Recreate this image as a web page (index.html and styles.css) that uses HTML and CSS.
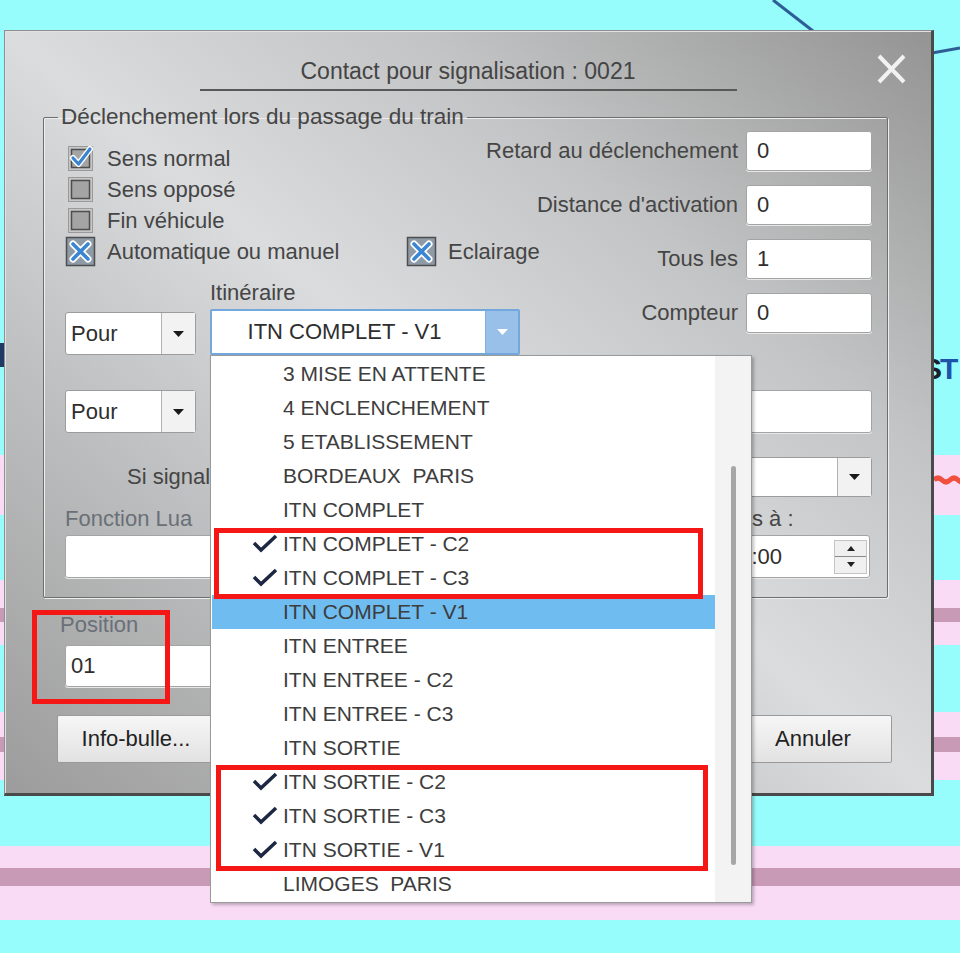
FILE: index.html
```html
<!DOCTYPE html>
<html>
	<head>
		<meta charset="utf-8">
		<title>Contact pour signalisation : 0021</title>
		<link rel="stylesheet" href="styles.css">
	</head>
	<body>
		<!-- fond du réseau derrière la fenêtre -->
		<svg class="desk-lines" width="960" height="953" viewBox="0 0 960 953">
			<path d="M773 0 L813 31" stroke="#2d5e95" stroke-width="3" fill="none"/>
			<path d="M932 53 L960 48" stroke="#2d5e95" stroke-width="3" fill="none"/>
			<rect x="0" y="343" width="5" height="24" fill="#1f3a66"/>
			<path d="M934 480 q4 -4 8 0 t8 0 t8 0 t8 0" stroke="#f2503e" stroke-width="5" fill="none"/>
		</svg>
		<span class="desk-label"><span class="desk-s">S</span><span class="desk-t">T</span></span>

		<div class="dialog">
			<div class="titlebar">
				<div class="title">Contact pour signalisation : 0021</div>
				<span class="close">
					<svg width="31" height="32" viewBox="0 0 31 32"><path d="M3 3 L28 29 M28 3 L3 29" stroke="#f2f2f2" stroke-width="4" fill="none"/></svg>
				</span>
			</div>

			<fieldset class="group">
				<legend>Déclenchement lors du passage du train</legend>
				<div class="group-body">
					<div class="group-top">
						<div class="left">
							<div class="checks">
								<label class="check">
									<svg class="box" width="31" height="31" viewBox="0 0 31 31"><rect x="3.5" y="3.5" width="24" height="24" fill="#c6c6c6" stroke="#9a9a9a"/><rect x="6.5" y="6.5" width="18" height="18" fill="#a4a4a4" stroke="#4e4e4e" stroke-width="1.5"/><path d="M8 15 L13.5 21 L25 6" fill="none" stroke="#ffffff" stroke-width="6" stroke-linecap="round" stroke-linejoin="round"/><path d="M8 15 L13.5 21 L25 6" fill="none" stroke="#3a83cf" stroke-width="3.2" stroke-linecap="round" stroke-linejoin="round"/></svg>
									Sens normal
								</label>
								<label class="check">
									<svg class="box" width="31" height="31" viewBox="0 0 31 31"><rect x="3.5" y="3.5" width="24" height="24" fill="#c6c6c6" stroke="#9a9a9a"/><rect x="6.5" y="6.5" width="18" height="18" fill="#a4a4a4" stroke="#4e4e4e" stroke-width="1.5"/></svg>
									Sens opposé
								</label>
								<label class="check">
									<svg class="box" width="31" height="31" viewBox="0 0 31 31"><rect x="3.5" y="3.5" width="24" height="24" fill="#c6c6c6" stroke="#9a9a9a"/><rect x="6.5" y="6.5" width="18" height="18" fill="#a4a4a4" stroke="#4e4e4e" stroke-width="1.5"/></svg>
									Fin véhicule
								</label>
								<div class="check-row">
									<label class="check">
										<svg class="box" width="31" height="31" viewBox="0 0 31 31"><rect x="1.5" y="1.5" width="28" height="28" fill="#8e9aa6" stroke="#4e4e4e" stroke-width="1.5"/><path d="M8 8 L23 23 M23 8 L8 23" stroke="#ffffff" stroke-width="7" stroke-linecap="round"/><path d="M8 8 L23 23 M23 8 L8 23" stroke="#3a86d4" stroke-width="3.6" stroke-linecap="round"/></svg>
										Automatique ou manuel
									</label>
									<label class="check">
										<svg class="box" width="31" height="31" viewBox="0 0 31 31"><rect x="1.5" y="1.5" width="28" height="28" fill="#8e9aa6" stroke="#4e4e4e" stroke-width="1.5"/><path d="M8 8 L23 23 M23 8 L8 23" stroke="#ffffff" stroke-width="7" stroke-linecap="round"/><path d="M8 8 L23 23 M23 8 L8 23" stroke="#3a86d4" stroke-width="3.6" stroke-linecap="round"/></svg>
										Eclairage
									</label>
								</div>
							</div>

							<div class="itin-grid">
								<span></span>
								<span class="label">Itinéraire</span>
								<div class="combo">
									<span class="combo-text">Pour</span>
									<span class="combo-btn"><svg width="11" height="6" viewBox="0 0 11 6"><path d="M0 0 H11 L5.5 6 Z" fill="#1a1a1a"/></svg></span>
								</div>
								<div class="combo combo-open">
									<span class="combo-text">ITN COMPLET - V1</span>
									<span class="combo-btn"><svg width="11" height="6" viewBox="0 0 11 6"><path d="M0 0 H11 L5.5 6 Z" fill="#ffffff"/></svg></span>

									<div class="dropdown">
										<div class="items">
											<div class="item"><span class="mark"></span>3 MISE EN ATTENTE</div>
											<div class="item"><span class="mark"></span>4 ENCLENCHEMENT</div>
											<div class="item"><span class="mark"></span>5 ETABLISSEMENT</div>
											<div class="item"><span class="mark"></span>BORDEAUX&nbsp; PARIS</div>
											<div class="item"><span class="mark"></span>ITN COMPLET</div>
											<div class="item"><span class="mark"><svg width="26" height="20" viewBox="0 0 26 20"><path d="M2 9 L9 16 L24 2" fill="none" stroke="#1d2742" stroke-width="3.5"/></svg></span>ITN COMPLET - C2</div>
											<div class="item"><span class="mark"><svg width="26" height="20" viewBox="0 0 26 20"><path d="M2 9 L9 16 L24 2" fill="none" stroke="#1d2742" stroke-width="3.5"/></svg></span>ITN COMPLET - C3</div>
											<div class="item selected"><span class="mark"></span>ITN COMPLET - V1</div>
											<div class="item"><span class="mark"></span>ITN ENTREE</div>
											<div class="item"><span class="mark"></span>ITN ENTREE - C2</div>
											<div class="item"><span class="mark"></span>ITN ENTREE - C3</div>
											<div class="item"><span class="mark"></span>ITN SORTIE</div>
											<div class="item"><span class="mark"><svg width="26" height="20" viewBox="0 0 26 20"><path d="M2 9 L9 16 L24 2" fill="none" stroke="#1d2742" stroke-width="3.5"/></svg></span>ITN SORTIE - C2</div>
											<div class="item"><span class="mark"><svg width="26" height="20" viewBox="0 0 26 20"><path d="M2 9 L9 16 L24 2" fill="none" stroke="#1d2742" stroke-width="3.5"/></svg></span>ITN SORTIE - C3</div>
											<div class="item"><span class="mark"><svg width="26" height="20" viewBox="0 0 26 20"><path d="M2 9 L9 16 L24 2" fill="none" stroke="#1d2742" stroke-width="3.5"/></svg></span>ITN SORTIE - V1</div>
											<div class="item"><span class="mark"></span>LIMOGES&nbsp; PARIS</div>
										</div>
										<div class="scrollbar"><span class="thumb"></span></div>
									</div>
								</div>
							</div>
						</div>

						<div class="fields">
							<div class="field"><span>Retard au déclenchement</span><span class="input">0</span></div>
							<div class="field"><span>Distance d'activation</span><span class="input">0</span></div>
							<div class="field"><span>Tous les</span><span class="input">1</span></div>
							<div class="field"><span>Compteur</span><span class="input">0</span></div>
						</div>
					</div>

					<div class="row row-a">
						<div class="combo">
							<span class="combo-text">Pour</span>
							<span class="combo-btn"><svg width="11" height="6" viewBox="0 0 11 6"><path d="M0 0 H11 L5.5 6 Z" fill="#1a1a1a"/></svg></span>
						</div>
						<span class="input"></span>
					</div>
					<div class="row row-b">
						<span class="label indent">Si signal fermé :</span>
						<div class="combo combo-wide">
							<span class="combo-text"></span>
							<span class="combo-btn"><svg width="11" height="6" viewBox="0 0 11 6"><path d="M0 0 H11 L5.5 6 Z" fill="#1a1a1a"/></svg></span>
						</div>
					</div>
					<div class="row row-c">
						<span class="label muted">Fonction Lua</span>
						<span class="label">Heures à :</span>
					</div>
					<div class="row row-d">
						<span class="input"></span>
						<span class="input spinner">
							<span class="spin-text">00:00</span>
							<span class="spin">
								<span class="spin-btn"><svg width="8" height="5" viewBox="0 0 8 5"><path d="M0 5 H8 L4 0 Z" fill="#222"/></svg></span>
								<span class="spin-btn"><svg width="8" height="5" viewBox="0 0 8 5"><path d="M0 0 H8 L4 5 Z" fill="#222"/></svg></span>
							</span>
						</span>
					</div>
				</div>
			</fieldset>

			<div class="position">
				<span class="label muted">Position</span>
				<span class="input position-input">01</span>
			</div>

			<div class="buttons">
				<span class="button">Info-bulle...</span>
				<span class="button push">OK</span>
				<span class="button">Annuler</span>
			</div>
		</div>

		<!-- repères rouges -->
		<div class="mark-box box-1"></div>
		<div class="mark-box box-2"></div>
		<div class="mark-box box-3"></div>
	</body>
</html>
```

FILE: styles.css
```css
* {
	box-sizing:border-box;
}

body {
	position:relative;
	margin:0;
	width:960px;
	height:953px;
	overflow:hidden;

	font-family:"Liberation Sans", Arial, sans-serif;
	font-size:22px;
	color:#454545;

	background:linear-gradient(to bottom,
		#97fcfc 0px, #97fcfc 455px,
		#f9dbf6 455px, #f9dbf6 515px,
		#97fcfc 515px, #97fcfc 580px,
		#f9dbf6 580px, #f9dbf6 608px,
		#c99ab6 608px, #c99ab6 622px,
		#f9dbf6 622px, #f9dbf6 645px,
		#97fcfc 645px, #97fcfc 712px,
		#f9dbf6 712px, #f9dbf6 737px,
		#c99ab6 737px, #c99ab6 752px,
		#f9dbf6 752px, #f9dbf6 780px,
		#97fcfc 780px, #97fcfc 846px,
		#f9dbf6 846px, #f9dbf6 868px,
		#c99ab6 868px, #c99ab6 886px,
		#f9dbf6 886px, #f9dbf6 920px,
		#97fcfc 920px);
}

/* fond */
.desk-lines {
	position:absolute;
	left:0px;
	top:0px;
}
.desk-label {
	position:absolute;
	left:922px;
	top:352px;

	font-size:30px;
	font-weight:bold;
	line-height:34px;
	letter-spacing:-2px;
}
	.desk-s {
		color:#1a1f2e;
	}
	.desk-t {
		color:#1e52a8;
	}

/* fenêtre */
.dialog {
	position:absolute;
	left:4px;
	top:30px;
	width:930px;
	height:766px;

	background:linear-gradient(to top right, #9c9c9c 0%, #bdbebf 28%, #dadcde 50%, #c3c4c5 72%, #949494 100%);
	border:1px solid #8e8e8e;
	border-right:3px solid #4a4a4a;
	border-bottom:3px solid #4a4a4a;
	box-shadow:inset 1px 1px 0 #e2e2e2;
}

.titlebar {
	display:grid;
	grid-template-columns:1fr 537px 1fr;
}
	.title {
		grid-column:2;
		padding:26px 0px 4px;

		border-bottom:2px solid #585858;

		font-size:23px;
		line-height:28px;
		text-align:center;
		color:#444;
	}
	.close {
		grid-column:3;
		justify-self:end;
		align-self:start;

		margin:22px 24px 0px 0px;
		width:31px;
		height:32px;
	}
	.close svg {
		display:block;
	}

/* cadre */
.group {
	margin:14px 43px 0px 38px;
	padding:0px;
	min-width:0px;

	border:1px solid #6e6e6e;
	border-radius:2px;
	box-shadow:inset 1px 1px 0 #eeeeee, 1px 1px 0 #eeeeee;
}
	.group legend {
		margin-left:14px;
		padding:0px 3px;

		font-size:22.5px;
		line-height:24px;
	}

.group-body {
	padding:2px 15px 19px 21px;
}

.group-top {
	display:grid;
	grid-template-columns:minmax(0, 1fr) auto;
	align-items:start;
	height:224px;
}

.checks {
	margin-top:12px;
}
	.check {
		display:flex;
		align-items:center;
		gap:11px;

		height:31px;
		white-space:nowrap;
	}
	.check .box {
		flex:none;
		display:block;
	}
	.check-row {
		display:grid;
		grid-template-columns:341px auto;
	}

.itin-grid {
	display:grid;
	grid-template-columns:131px 310px;
	column-gap:14px;
	row-gap:4px;
	align-items:end;

	margin-top:14px;
}

.label {
	line-height:24px;
	white-space:nowrap;
}
	.muted {
		color:#6a7078;
	}
	.indent {
		padding-left:62px;
	}

/* listes déroulantes */
.combo {
	position:relative;
	display:flex;

	height:43px;

	background:white;
	border:1px solid #9c9c9c;
	border-radius:3px;
}
	.combo-text {
		flex:1;
		display:flex;
		align-items:center;
		padding-left:5px;

		color:#2e2e2e;
	}
	.combo-btn {
		display:flex;
		align-items:center;
		justify-content:center;

		width:34px;

		background:#f2f2f2;
		border-left:1px solid #b2b2b2;
	}
	.combo-wide {
		height:40px;
	}

.combo-open {
	height:46px;
	border:2px solid #72a8de;
	border-radius:2px;
}
	.combo-open .combo-text {
		justify-content:center;
		padding-left:0px;
		padding-right:8px;
	}
	.combo-open .combo-btn {
		width:33px;

		background:#98c0e8;
		border-left:1px solid #7fb0e0;
	}

.dropdown {
	position:absolute;
	left:-2px;
	top:calc(100% + 2px);
	z-index:10;

	display:flex;
	width:542px;
	height:548px;

	background:white;
	border:1px solid #9a9a9a;
	box-shadow:2px 2px 3px rgba(0,0,0,0.25);
}
	.items {
		width:503px;
		margin-left:1px;
		padding-top:1px;
	}
	.item {
		display:flex;
		align-items:center;

		height:34px;

		font-size:21px;
		color:#3d3d3d;
		white-space:nowrap;
	}
	.item.selected {
		background:#6ebcf0;
	}
	.mark {
		display:flex;
		align-items:center;

		margin-left:40px;
		margin-right:5px;
		width:26px;
		height:20px;
	}
	.mark svg {
		display:block;
	}
	.scrollbar {
		width:36px;
		background:#f3f3f3;
	}
	.thumb {
		display:block;

		margin:110px 0px 0px 16px;
		width:5px;
		height:399px;

		background:#a6a6a6;
		border-radius:3px;
	}

/* champs */
.fields {
	display:flex;
	flex-direction:column;
	gap:14px;
}
	.field {
		display:flex;
		align-items:center;
		justify-content:flex-end;
		gap:8px;

		white-space:nowrap;
	}

.input {
	display:flex;
	align-items:center;

	width:126px;
	height:40px;
	padding-left:10px;

	background:white;
	border:1px solid #a4a4a4;
	border-radius:3px;
	box-shadow:0 1px 0 #e8e8e8;

	color:#2e2e2e;
}

.row {
	display:grid;
	grid-template-columns:1fr 180px;
	column-gap:30px;
	align-items:center;
}
	.row .input {
		width:auto;
	}
	.row-a {
		margin-top:35px;
	}
	.row-a .combo {
		width:131px;
	}
	.row-a .input {
		height:43px;
	}
	.row-b {
		margin-top:24px;
	}
	.row-c {
		margin-top:10px;
	}
	.row-d {
		margin-top:4px;
	}
	.row-d .input {
		height:43px;
	}

.spinner {
	justify-content:space-between;
	margin-right:2px;
	padding-left:34px;
}
	.spin {
		display:flex;
		flex-direction:column;
		justify-content:center;

		margin-right:2px;
		width:33px;
		height:34px;

		background:#f0f0f0;
		border:1px solid #c4c4c4;
	}
	.spin-btn {
		flex:1;
		display:flex;
		align-items:center;
		justify-content:center;
	}
	.spin-btn + .spin-btn {
		border-top:1px solid #8a8a8a;
	}

/* bas de la fenêtre */
.position {
	display:flex;
	flex-direction:column;
	align-items:flex-start;

	margin:15px 0px 0px 55px;
}
	.position-input {
		margin:8px 0px 0px 5px;
		width:170px;
		height:42px;
		padding-left:5px;
	}

.buttons {
	display:flex;
	gap:16px;

	margin:28px 39px 0px 52px;
}
	.button {
		display:flex;
		align-items:center;
		justify-content:center;

		width:158px;
		height:48px;

		background:linear-gradient(#f6f6f6, #e2e2e2);
		border:1px solid #9a9a9a;
		border-radius:2px;

		color:#222;
	}
	.push {
		margin-left:auto;
	}

/* repères */
.mark-box {
	position:absolute;
	z-index:20;

	border:5px solid #f51616;
}
	.box-1 {
		left:214px;
		top:528px;
		width:489px;
		height:71px;
	}
	.box-2 {
		left:216px;
		top:765px;
		width:492px;
		height:106px;
	}
	.box-3 {
		left:32px;
		top:610px;
		width:138px;
		height:94px;
	}
```
